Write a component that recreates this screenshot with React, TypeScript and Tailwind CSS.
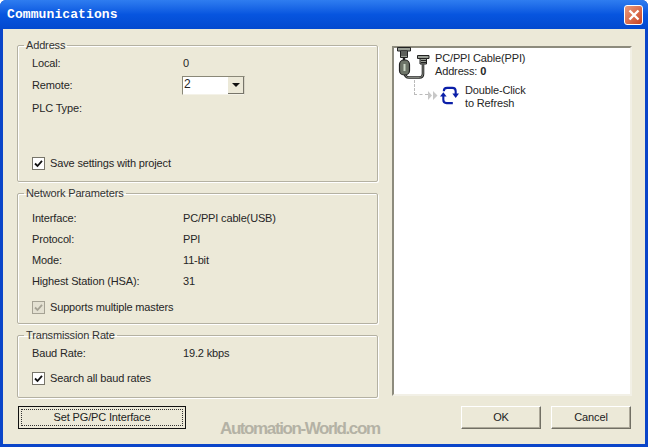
import type { ReactNode } from 'react';

const font = { fontFamily: '"Liberation Sans", Arial, sans-serif' };

function Group({ title, className, children }: { title: string; className: string; children: ReactNode }) {
  return (
    <fieldset className={`border border-[#b4b1a2] rounded-[2px] shadow-[1px_1px_0_#fff,inset_1px_1px_0_#fff] pl-[14px] pr-2 ${className}`}>
      <legend className="-ml-[8px] px-[2px] text-[11px] leading-[12px] text-[#333]">{title}</legend>
      {children}
    </fieldset>
  );
}

function Row({ label, value, className = '' }: { label: string; value?: ReactNode; className?: string }) {
  return (
    <div className={`flex items-center h-[13px] ${className}`}>
      <span className="w-[151px] shrink-0 whitespace-nowrap">{label}</span>
      {value !== undefined && <span className="whitespace-nowrap">{value}</span>}
    </div>
  );
}

function Check({ label, disabled = false, className = '' }: { label: string; disabled?: boolean; className?: string }) {
  return (
    <div className={`flex items-center gap-[5px] h-[13px] ${className}`}>
      <span className={`w-[13px] h-[13px] shrink-0 border flex items-center justify-center ${disabled ? 'border-[#a5a294] bg-[#e4e1d2]' : 'border-[#77756a] bg-white'}`}>
        <svg width="9" height="9" viewBox="0 0 9 9">
          <path d="M1 4.5 L3.5 7 L8 1.8" fill="none" stroke={disabled ? '#a5a294' : '#111'} strokeWidth="1.8" />
        </svg>
      </span>
      <span className="whitespace-nowrap">{label}</span>
    </div>
  );
}

function Combo() {
  return (
    <div className="w-[63px] h-[19px] flex items-stretch bg-white border border-[#8a8878] border-r-[#d8d5c6] border-b-[#f4f2e8]">
      <span className="flex-1 pl-[1px] leading-[15px] text-[12px]">2</span>
      <span className="w-[16px] bg-[#ece9d8] border-r border-b border-[#77756a] flex items-center justify-center">
        <svg width="8" height="4" viewBox="0 0 8 4"><path d="M0 0 H8 L4 4 Z" fill="#111" /></svg>
      </span>
    </div>
  );
}

function CableIcon() {
  return (
    <svg width="33" height="33" viewBox="0 0 33 33" className="shrink-0">
      <g fill="#9a9f96" stroke="#222" strokeWidth="1">
        <path d="M0.5 0.5 H13.5 V4 H0.5 Z" />
        <path d="M3.5 4 H10.5 V10.5 H3.5 Z" />
        <path d="M20.5 8.5 H32 V11.5 H20.5 Z" />
        <path d="M23 11.5 H29.5 V17 H23 Z" />
      </g>
      <path d="M4 6 H10 M4 8 H10 M24 13.5 H29 M24 15.5 H29" stroke="#222" strokeWidth="1" />
      <path d="M7 10.5 V14" fill="none" stroke="#222" strokeWidth="2.4" />
      <path d="M26 17 V27 Q26 30.5 22.5 30.5 H12 Q8 30.5 8 26" fill="none" stroke="#222" strokeWidth="2.6" />
      <path d="M26 17 V27 Q26 30.5 22.5 30.5 H12 Q8 30.5 8 26" fill="none" stroke="#9aa095" strokeWidth="0.8" />
      <rect x="2.5" y="13" width="10" height="15" rx="4.5" fill="#6d7468" stroke="#222" strokeWidth="1.2" />
      <rect x="6.5" y="17" width="2" height="7" fill="#c9d4c4" />
    </svg>
  );
}

function RefreshIcon() {
  return (
    <svg width="19" height="19" viewBox="0 0 20 20" className="shrink-0">
      <path d="M4 5.5 Q4 2 7.5 2 H13 Q16.5 2 16.5 5.5 V9" fill="none" stroke="#0b1fa8" strokeWidth="2.2" />
      <path d="M3.5 10 V14.5 Q3.5 18 7 18 H13.5" fill="none" stroke="#0b1fa8" strokeWidth="2.2" />
      <path d="M0 11 L3.5 6.5 L7 11 Z" fill="#0b1fa8" />
      <path d="M13 8 L20 8 L16.5 12.5 Z" fill="#0b1fa8" />
    </svg>
  );
}

function Button({ children, className = '' }: { children: ReactNode; className?: string }) {
  return (
    <button className={`h-[23px] bg-[#ece9d8] border border-[#fff] border-r-[#716f64] border-b-[#716f64] text-[11px] leading-none text-[#222] shadow-[inset_-1px_-1px_0_#aca899] ${className}`}>
      {children}
    </button>
  );
}

export default function App() {
  return (
    <div style={font} className="relative w-[648px] h-[447px] flex flex-col overflow-hidden bg-[#0a45c9] rounded-t-[6px] text-[11px] leading-[13px] tracking-[-0.15px] text-[#262626]">
      {/* Title bar */}
      <div className="h-[29px] shrink-0 flex items-center justify-between pl-[7px] pr-[5px] bg-gradient-to-b from-[#2f7df0] via-[#0755df] to-[#0349cf]">
        <span style={{ fontFamily: '"Liberation Mono", monospace' }} className="text-[13px] tracking-[0.1px] font-bold text-white">Communications</span>
        <span className="w-[19px] h-[20px] rounded-[3px] border border-white bg-gradient-to-br from-[#e99a7c] to-[#c9401d] flex items-center justify-center">
          <svg width="12" height="12" viewBox="0 0 12 12"><path d="M1.5 1.5 L10.5 10.5 M10.5 1.5 L1.5 10.5" stroke="#fff" strokeWidth="2.4" /></svg>
        </span>
      </div>

      {/* Dialog body */}
      <div className="flex-1 mx-[3px] mb-[3px] bg-[#ece9d8] flex flex-col pl-[14px] pr-[13px] pt-[10px]">
        <div className="flex gap-[14px]">
          <div className="w-[361px] flex flex-col gap-[5px]">
            <Group title="Address" className="h-[143px] pt-[6px]">
              <Row label="Local:" value="0" />
              <div className="flex items-center h-[13px] mt-[9px]">
                <span className="w-[150px] shrink-0">Remote:</span>
                <Combo />
              </div>
              <Row label="PLC Type:" className="mt-[10px]" />
              <Check label="Save settings with project" className="mt-[42px]" />
            </Group>
            <Group title="Network Parameters" className="h-[137px] pt-[13px]">
              <Row label="Interface:" value="PC/PPI cable(USB)" />
              <Row label="Protocol:" value="PPI" className="mt-[8px]" />
              <Row label="Mode:" value="11-bit" className="mt-[8px]" />
              <Row label="Highest Station (HSA):" value="31" className="mt-[8px]" />
              <Check label="Supports multiple masters" disabled className="mt-[13px]" />
            </Group>
            <Group title="Transmission Rate" className="h-[69px] pt-[6px]">
              <Row label="Baud Rate:" value="19.2 kbps" />
              <Check label="Search all baud rates" className="mt-[12px]" />
            </Group>
          </div>

          {/* Tree panel */}
          <div className="mt-[7px] w-[240px] h-[350px] shrink-0 bg-white border-2 border-[#8d8b7d] border-r-[#f2f0e6] border-b-[#f2f0e6] pl-[3px]">
            <div className="flex -mt-[1px]">
              <CableIcon />
              <div className="mt-[5px] ml-[5px]">
                <div>PC/PPI Cable(PPI)</div>
                <div>Address: <b>0</b></div>
              </div>
            </div>
            <div className="flex">
              <div className="ml-[17px] w-[14px] h-[15px] border-l border-b border-dashed border-[#bbb]" />
              <svg width="10" height="9" viewBox="0 0 10 9" className="mt-[11px] shrink-0">
                <path d="M0 0 L4 4.5 L0 9 Z M5 0 L9.5 4.5 L5 9 Z" fill="#c8c8c8" />
              </svg>
              <div className="mt-[6px] ml-[2px]"><RefreshIcon /></div>
              <div className="ml-[6px] mt-[4px]">
                <div>Double-Click</div>
                <div>to Refresh</div>
              </div>
            </div>
          </div>
        </div>

        <div className="flex items-center mt-[8px] mr-[1px]">
          <button className="w-[168px] h-[23px] ml-[1px] bg-[#ece9d8] border border-[#111] text-[11px] text-[#222] p-[2px]">
            <span className="flex items-center justify-center h-full border border-dotted border-[#333]">Set PG/PC Interface</span>
          </button>
          <Button className="w-[80px] ml-auto">OK</Button>
          <Button className="w-[80px] ml-[10px]">Cancel</Button>
        </div>
      </div>

      {/* Watermark */}
      <span className="absolute left-[220px] top-[419px] text-[17px] leading-[20px] font-bold tracking-[-1.4px] text-[#b4b2a5]">Automation-World.com</span>
    </div>
  );
}
